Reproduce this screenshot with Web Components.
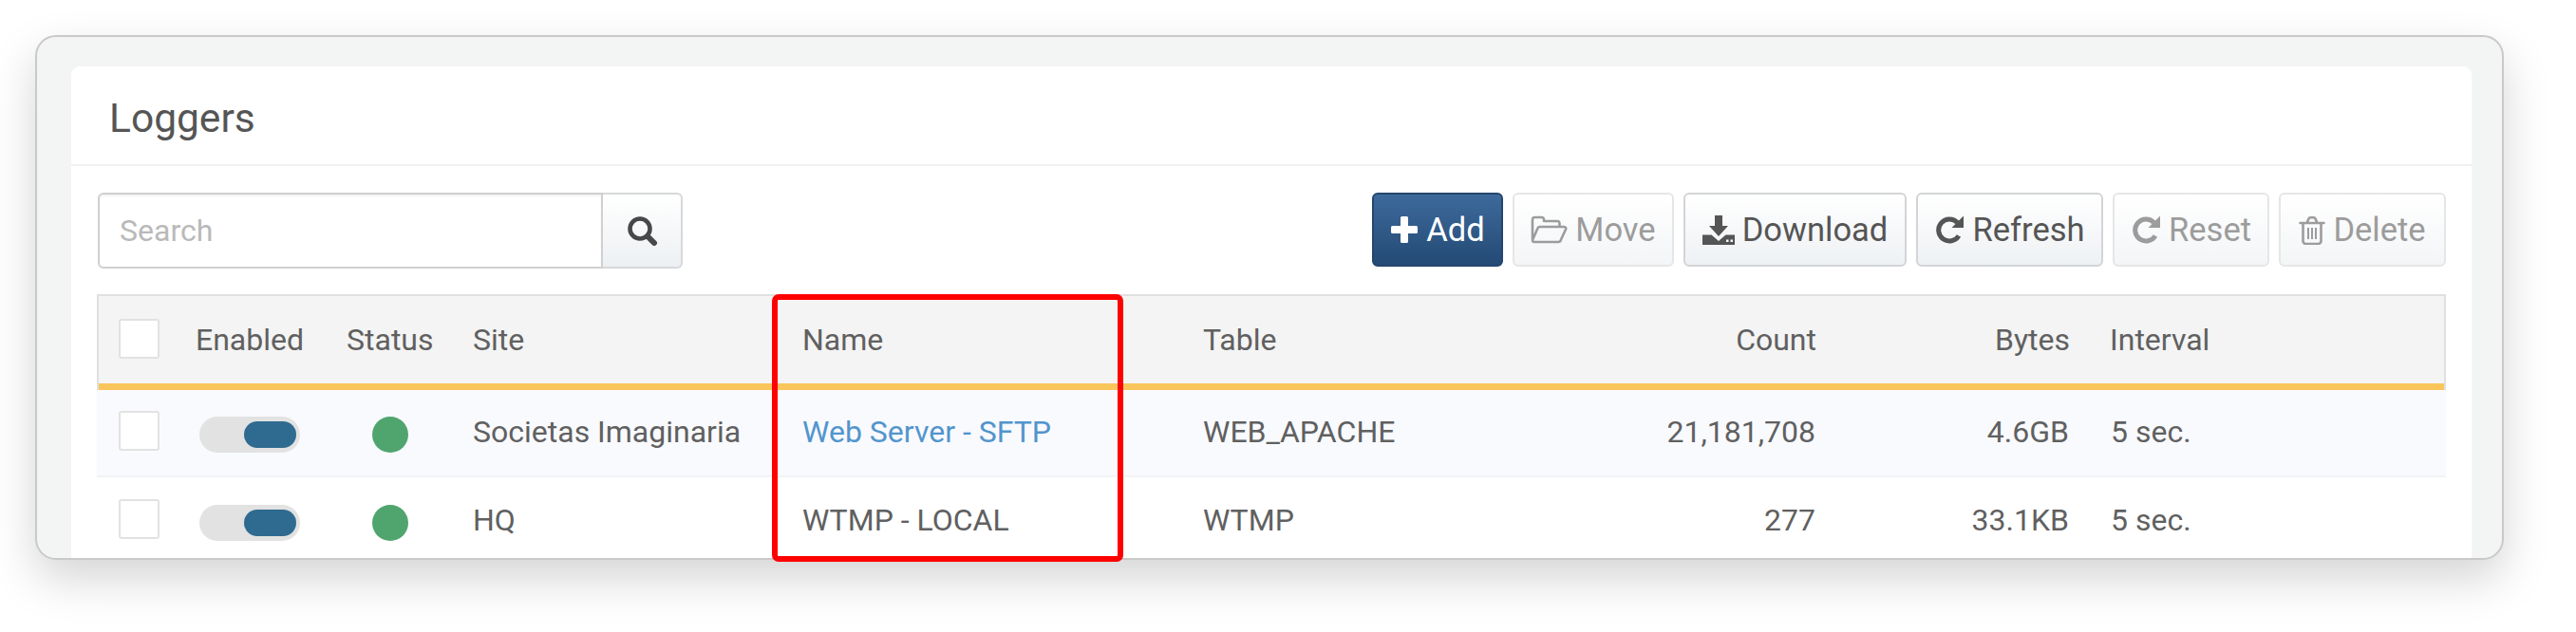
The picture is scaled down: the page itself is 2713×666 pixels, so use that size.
<!DOCTYPE html>
<html>
<head>
<meta charset="utf-8">
<title>Loggers</title>
<style>
html, body { margin: 0; background: #fff; }
body { font-family: Roboto, "Liberation Sans", sans-serif; color: #606060; overflow: hidden; }
</style>
</head>
<body>
<log-stage>
  <log-window>
    <log-panel heading="Loggers">
      <log-toolbar>
        <log-search slot="left" placeholder="Search"></log-search>
        <log-button primary icon="plus" style="width:138px">Add</log-button>
        <log-button disabled icon="folder" style="width:170px">Move</log-button>
        <log-button icon="download" style="width:235px">Download</log-button>
        <log-button icon="repeat" style="width:197px">Refresh</log-button>
        <log-button disabled icon="repeat" style="width:165px">Reset</log-button>
        <log-button disabled icon="trash" style="width:176px">Delete</log-button>
      </log-toolbar>
      <log-table>
        <log-row head>
          <log-check></log-check><span>Enabled</span><span>Status</span><span>Site</span><span>Name</span><span>Table</span><span>Count</span><span>Bytes</span><span>Interval</span>
        </log-row>
        <log-row tint>
          <log-check></log-check><log-switch></log-switch><log-dot></log-dot><span>Societas Imaginaria</span><a>Web Server - SFTP</a><span>WEB_APACHE</span><span>21,181,708</span><span>4.6GB</span><span>5 sec.</span>
        </log-row>
        <log-row>
          <log-check></log-check><log-switch></log-switch><log-dot></log-dot><span>HQ</span><span>WTMP - LOCAL</span><span>WTMP</span><span>277</span><span>33.1KB</span><span>5 sec.</span>
        </log-row>
      </log-table>
    </log-panel>
  </log-window>
</log-stage>
<script>
var ICONS = {
  plus: '<svg width="30" height="30" viewBox="0 0 30 30"><path fill="currentColor" d="M11 2.500a1.500 1.500 0 0 1 1.500-1.500h5a1.500 1.500 0 0 1 1.500 1.500V11h8.500a1.500 1.500 0 0 1 1.500 1.500v5a1.500 1.500 0 0 1-1.500 1.500H19v8.500a1.500 1.500 0 0 1-1.500 1.500h-5a1.500 1.500 0 0 1-1.500-1.500V19H2.500A1.500 1.500 0 0 1 1 17.500v-5A1.500 1.500 0 0 1 2.500 11H11z"/></svg>',
  folder: '<svg width="39" height="30" viewBox="0 0 39 30"><path fill="none" stroke="currentColor" stroke-width="2.600" stroke-linejoin="round" d="M2 26V4.500A2.500 2.500 0 0 1 4.500 2h7a2.500 2.500 0 0 1 2.500 2.500V6h14a2.500 2.500 0 0 1 2.500 2.500V12M2 26l5.500-12.500A2.500 2.500 0 0 1 10 12h25.500a1.800 1.800 0 0 1 1.600 2.500L32 25.500A3 3 0 0 1 29.500 28H4a2 2 0 0 1-2-2z"/></svg>',
  download: '<svg width="34" height="31" viewBox="0 0 34 31"><path fill="currentColor" fill-rule="evenodd" d="M13 0h8v11h6L17 22 7 11h6zM0 20.500h9.500L17 27l7.500-6.500H34V31H0zM25 25.500v2.500h2.500v-2.500zM29.500 25.500v2.500H32v-2.500z"/></svg>',
  repeat: '<svg width="32" height="32" viewBox="0 0 32 32"><path fill="none" stroke="currentColor" stroke-width="5" d="M26 22.500A11.500 11.500 0 1 1 24.500 8.500"/><path fill="currentColor" d="M31 1.500V14H18.500z"/></svg>',
  trash: '<svg width="28" height="31" viewBox="0 0 28 31"><path fill="none" stroke="currentColor" stroke-width="2.600" stroke-linecap="round" d="M1.500 8h25M4.500 8v19a3 3 0 0 0 3 3h13a3 3 0 0 0 3-3V8M8.500 8l2-4.500a2 2 0 0 1 1.800-1.200h3.400a2 2 0 0 1 1.800 1.200l2 4.500"/><path fill="none" stroke="currentColor" stroke-width="2" d="M10 13v12M14 13v12M18 13v12"/></svg>',
  search: '<svg width="33" height="31" viewBox="0 0 33 31"><circle cx="14" cy="13" r="10.500" fill="none" stroke="currentColor" stroke-width="4.600"/><path stroke="currentColor" stroke-width="6" stroke-linecap="round" d="M22 21l7 7"/></svg>'
};

function shadow(el, html) {
  var root = el.attachShadow({mode: 'open'});
  root.innerHTML = html;
  return root;
}

customElements.define('log-stage', class extends HTMLElement {
  constructor() {
    super();
    shadow(this, `
      <style>
        :host { display: block; position: relative; width: 2713px; height: 666px; padding: 37px 76px 0 37px; box-sizing: border-box; }
        .mark { position: absolute; left: 813px; top: 310px; width: 370px; height: 282px; box-sizing: border-box; border: 6px solid #fe0000; border-radius: 7px; }
      </style>
      <slot></slot>
      <div class="mark"></div>`);
  }
});

customElements.define('log-window', class extends HTMLElement {
  constructor() {
    super();
    shadow(this, `
      <style>
        :host { display: block; height: 553px; box-sizing: border-box; padding: 31px 32px 0 36px; background: #f3f5f4; border: 2px solid #c9c9c9; border-radius: 22px; overflow: hidden; box-shadow: 0 20px 48px rgba(0,0,0,.17); }
      </style>
      <slot></slot>`);
  }
});

customElements.define('log-panel', class extends HTMLElement {
  constructor() {
    super();
    shadow(this, `
      <style>
        :host { display: block; background: #fff; border-radius: 9px 9px 0 0; height: 600px; }
        h1 { margin: 0; height: 105px; box-sizing: border-box; padding: 0 0 0 40px; border-bottom: 2px solid #f0f0f0; font: 400 42.500px/110px Roboto, sans-serif; color: #555; }
        .body { padding: 28px 27px 0 27px; }
      </style>
      <h1></h1>
      <div class="body"><slot></slot></div>`);
    this.shadowRoot.querySelector('h1').textContent = this.getAttribute('heading');
  }
});

customElements.define('log-toolbar', class extends HTMLElement {
  constructor() {
    super();
    shadow(this, `
      <style>
        :host { display: flex; justify-content: space-between; align-items: flex-start; height: 107px; }
        .right { display: flex; gap: 10px; }
      </style>
      <slot name="left"></slot>
      <div class="right"><slot></slot></div>`);
  }
});

customElements.define('log-search', class extends HTMLElement {
  constructor() {
    super();
    shadow(this, `
      <style>
        :host { display: flex; height: 80px; margin-left: 1px; }
        .input { width: 532px; box-sizing: border-box; border: 2px solid #d0d0d0; border-radius: 6px 0 0 6px; padding: 0 0 2px 21px; font: 400 32px/76px Roboto, sans-serif; color: #b9b9b9; box-shadow: inset 0 2px 2px rgba(0,0,0,.05); }
        .go { width: 84px; box-sizing: border-box; border: 2px solid #d6d8da; border-left: 0; border-radius: 0 6px 6px 0; background: linear-gradient(#fff, #edf0f3); color: #484848; display: flex; align-items: center; justify-content: center; }
        svg { display: block; }
      </style>
      <div class="input"></div>
      <div class="go">${ICONS.search}</div>`);
    this.shadowRoot.querySelector('.input').textContent = this.getAttribute('placeholder');
  }
});

customElements.define('log-button', class extends HTMLElement {
  constructor() {
    super();
    shadow(this, `
      <style>
        :host { display: flex; align-items: center; justify-content: center; gap: 8px; height: 78px; box-sizing: border-box; border: 2px solid #d3d4d6; border-radius: 6px; background: linear-gradient(#fff, #eef1f4); font: 400 34.500px/1 Roboto, sans-serif; color: #555; white-space: nowrap; }
        :host([disabled]) { color: #9c9c9c; border-color: #e6e6e6; background: linear-gradient(#fff, #f3f5f7); }
        :host([primary]) { color: #fff; border-color: #24466e; background: linear-gradient(#3d6a9b, #244a75); }
        svg { display: block; flex: none; }
      </style>
      <span class="icon"></span><slot></slot>`);
    this.shadowRoot.querySelector('.icon').innerHTML = ICONS[this.getAttribute('icon')];
  }
});

customElements.define('log-table', class extends HTMLElement {
  constructor() {
    super();
    shadow(this, `
      <style>
        :host { display: block; }
      </style>
      <slot></slot>`);
  }
});

customElements.define('log-row', class extends HTMLElement {
  constructor() {
    super();
    shadow(this, `
      <style>
        :host { display: grid; grid-template-columns: 105px 159px 132px 347px 422px 300px 345px 267px 1fr; align-items: center; height: 92px; box-sizing: border-box; font: 400 32px/1 Roboto, sans-serif; color: #606060; }
        :host([tint]) { background: #f9fafe; border-bottom: 2px solid #f2f3f6; }
        :host([head]) { height: 101px; background: #f4f4f4; border: 2px solid #e0e0e0; border-bottom: 0; box-shadow: inset 0 -7px 0 #fac55a; padding-bottom: 5px; grid-template-columns: 102px 159px 133px 347px 422px 300px 346px 267px 1fr; }
        ::slotted(span), ::slotted(a) { padding-bottom: 2px; white-space: nowrap; }
        ::slotted(a) { color: #5295cd; }
        ::slotted(:nth-child(7)), ::slotted(:nth-child(8)) { text-align: right; }
        ::slotted(:nth-child(9)) { padding-left: 44px; }
        :host([head]) ::slotted(:nth-child(9)) { padding-left: 42px; }
      </style>
      <slot></slot>`);
  }
});

customElements.define('log-check', class extends HTMLElement {
  constructor() {
    super();
    shadow(this, `
      <style>
        :host { display: block; width: 43px; height: 42px; box-sizing: border-box; margin: 0 0 5px 23px; background: #fff; border: 2px solid #e2e2e2; border-radius: 3px; }
        :host-context(log-row[head]) { margin-left: 21px; }
      </style>`);
  }
});

customElements.define('log-switch', class extends HTMLElement {
  constructor() {
    super();
    shadow(this, `
      <style>
        :host { display: flex; justify-content: flex-end; align-items: center; width: 106px; height: 38px; box-sizing: border-box; margin: 3px 0 0 3px; padding-right: 4px; background: #e2e2e2; border-radius: 19px; }
        i { display: block; width: 55px; height: 28px; border-radius: 14px; background: #2f6b90; }
      </style>
      <i></i>`);
  }
});

customElements.define('log-dot', class extends HTMLElement {
  constructor() {
    super();
    shadow(this, `
      <style>
        :host { display: block; width: 38px; height: 38px; margin: 3px 0 0 26px; border-radius: 50%; background: #50a56f; }
      </style>`);
  }
});
</script>
</body>
</html>
